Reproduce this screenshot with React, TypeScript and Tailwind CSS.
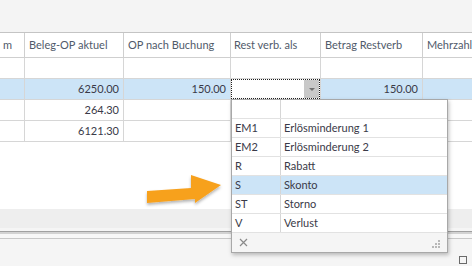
import React from 'react';

const cols = 'grid grid-cols-[25px_99px_107px_90px_102px_1fr]';

const rows = [
  { a: '', b: '', c: '', selected: false },
  { a: '6250.00', b: '150.00', c: '150.00', selected: true },
  { a: '264.30', b: '', c: '', selected: false },
  { a: '6121.30', b: '', c: '', selected: false },
];

const options = [
  { code: '', name: '' },
  { code: 'EM1', name: 'Erlösminderung 1' },
  { code: 'EM2', name: 'Erlösminderung 2' },
  { code: 'R', name: 'Rabatt' },
  { code: 'S', name: 'Skonto', active: true },
  { code: 'ST', name: 'Storno' },
  { code: 'V', name: 'Verlust' },
];

const App: React.FC = () => {
  return (
    <div
      className="relative w-[472px] h-[266px] overflow-hidden bg-[#f5f5f5] text-[11px] text-[#3a3a48]"
      style={{ fontFamily: 'Lato, "Noto Sans", sans-serif' }}
    >
      {/* toolbar area */}
      <div className="h-[33px] bg-[#f4f4f4] border-b border-[#c4c4c4]" />

      {/* header */}
      <div className={`${cols} h-[25px] bg-white border-b border-[#cfcfcf] text-[#505a6a]`}>
        <div className="border-r border-[#cfcfcf] pl-[3px] flex items-center overflow-hidden">m</div>
        <div className="border-r border-[#cfcfcf] pl-[4px] flex items-center">Beleg-OP aktuel</div>
        <div className="border-r border-[#cfcfcf] pl-[4px] flex items-center">OP nach Buchung</div>
        <div className="border-r border-[#cfcfcf] pl-[3px] flex items-center">Rest verb. als</div>
        <div className="border-r border-[#cfcfcf] pl-[4px] flex items-center">Betrag Restverb</div>
        <div className="pl-[4px] flex items-center whitespace-nowrap overflow-hidden">Mehrzahlung</div>
      </div>

      {/* rows */}
      {rows.map((r, i) => (
        <div
          key={i}
          className={`${cols} h-[21px] border-b border-[#d6d6d6] ${r.selected ? 'bg-[#cce4f7]' : 'bg-white'}`}
        >
          <div className="border-r border-[#d6d6d6]" />
          <div className="border-r border-[#d6d6d6] pr-[4px] flex items-center justify-end">{r.a}</div>
          <div className="border-r border-[#d6d6d6] pr-[4px] flex items-center justify-end">{r.b}</div>
          <div className="border-r border-[#d6d6d6] relative">
            {r.selected && (
              <div className="absolute inset-0 bg-white border border-dotted border-[#202020] flex justify-end">
                <div className="w-[15px] h-full bg-[#c8c8c8] flex items-center justify-center">
                  <span className="w-0 h-0 border-l-[3px] border-r-[3px] border-t-[3px] border-l-transparent border-r-transparent border-t-[#707070]" />
                </div>
              </div>
            )}
          </div>
          <div className="border-r border-[#d6d6d6] pr-[4px] flex items-center justify-end">{r.c}</div>
          <div />
        </div>
      ))}

      <div className="h-[67px] bg-white" />
      <div className="h-[19px] bg-[#eeeeee]" />
      <div className="h-[3px] bg-[#f5f5f5]" />
      <div className="h-[1px] bg-[#a0a0a0]" />
      <div className="h-[2px] bg-[#d2d2d2]" />
      <div className="h-[4px] bg-[#f7f7f7]" />
      <div className="h-[1px] bg-[#c8c8c8]" />

      {/* small box bottom right */}
      <div className="absolute left-[459px] top-[256px] w-[8px] h-[8px] border border-[#6a6a6a]" />

      {/* dropdown popup */}
      <div className="absolute left-[231px] top-[99px] w-[217px] h-[154px] bg-white border border-[#a8a8a8] shadow-[1px_2px_4px_rgba(0,0,0,0.25)] flex flex-col">
        {options.map((o, i) => (
          <div
            key={i}
            className={`grid grid-cols-[49px_1fr] h-[19px] border-b border-[#e2e2e2] ${o.active ? 'bg-[#cce4f7]' : ''}`}
          >
            <div className="border-r border-[#d6d6d6] pl-[3px] flex items-center">{o.code}</div>
            <div className="pl-[3px] flex items-center">{o.name}</div>
          </div>
        ))}
        <div className="flex-1 bg-[#f5f5f5] flex items-center justify-between px-[7px]">
          <svg width="9" height="9" viewBox="0 0 9 9" className="text-[#8a8a8a]">
            <path d="M1 1L8 8M8 1L1 8" stroke="currentColor" strokeWidth="1.2" />
          </svg>
          <svg width="10" height="10" viewBox="0 0 10 10" className="text-[#b8b8b8] mt-[4px]">
            <rect x="8" y="0" width="2" height="2" fill="currentColor" />
            <rect x="5" y="3" width="2" height="2" fill="currentColor" />
            <rect x="8" y="3" width="2" height="2" fill="currentColor" />
            <rect x="2" y="6" width="2" height="2" fill="currentColor" />
            <rect x="5" y="6" width="2" height="2" fill="currentColor" />
            <rect x="8" y="6" width="2" height="2" fill="currentColor" />
          </svg>
        </div>
      </div>

      {/* orange arrow */}
      <svg className="absolute left-[140px] top-[170px]" width="90" height="42" viewBox="0 0 90 42">
        <defs>
          <filter id="sh" x="-20%" y="-20%" width="140%" height="160%">
            <feDropShadow dx="0" dy="2" stdDeviation="1.5" floodColor="#000" floodOpacity="0.3" />
          </filter>
        </defs>
        <polygon
          points="7,21 51,18 51,5 81,15 55,33 55,29 7,33"
          fill="#f7a11f"
          filter="url(#sh)"
        />
      </svg>
    </div>
  );
};

export default App;
